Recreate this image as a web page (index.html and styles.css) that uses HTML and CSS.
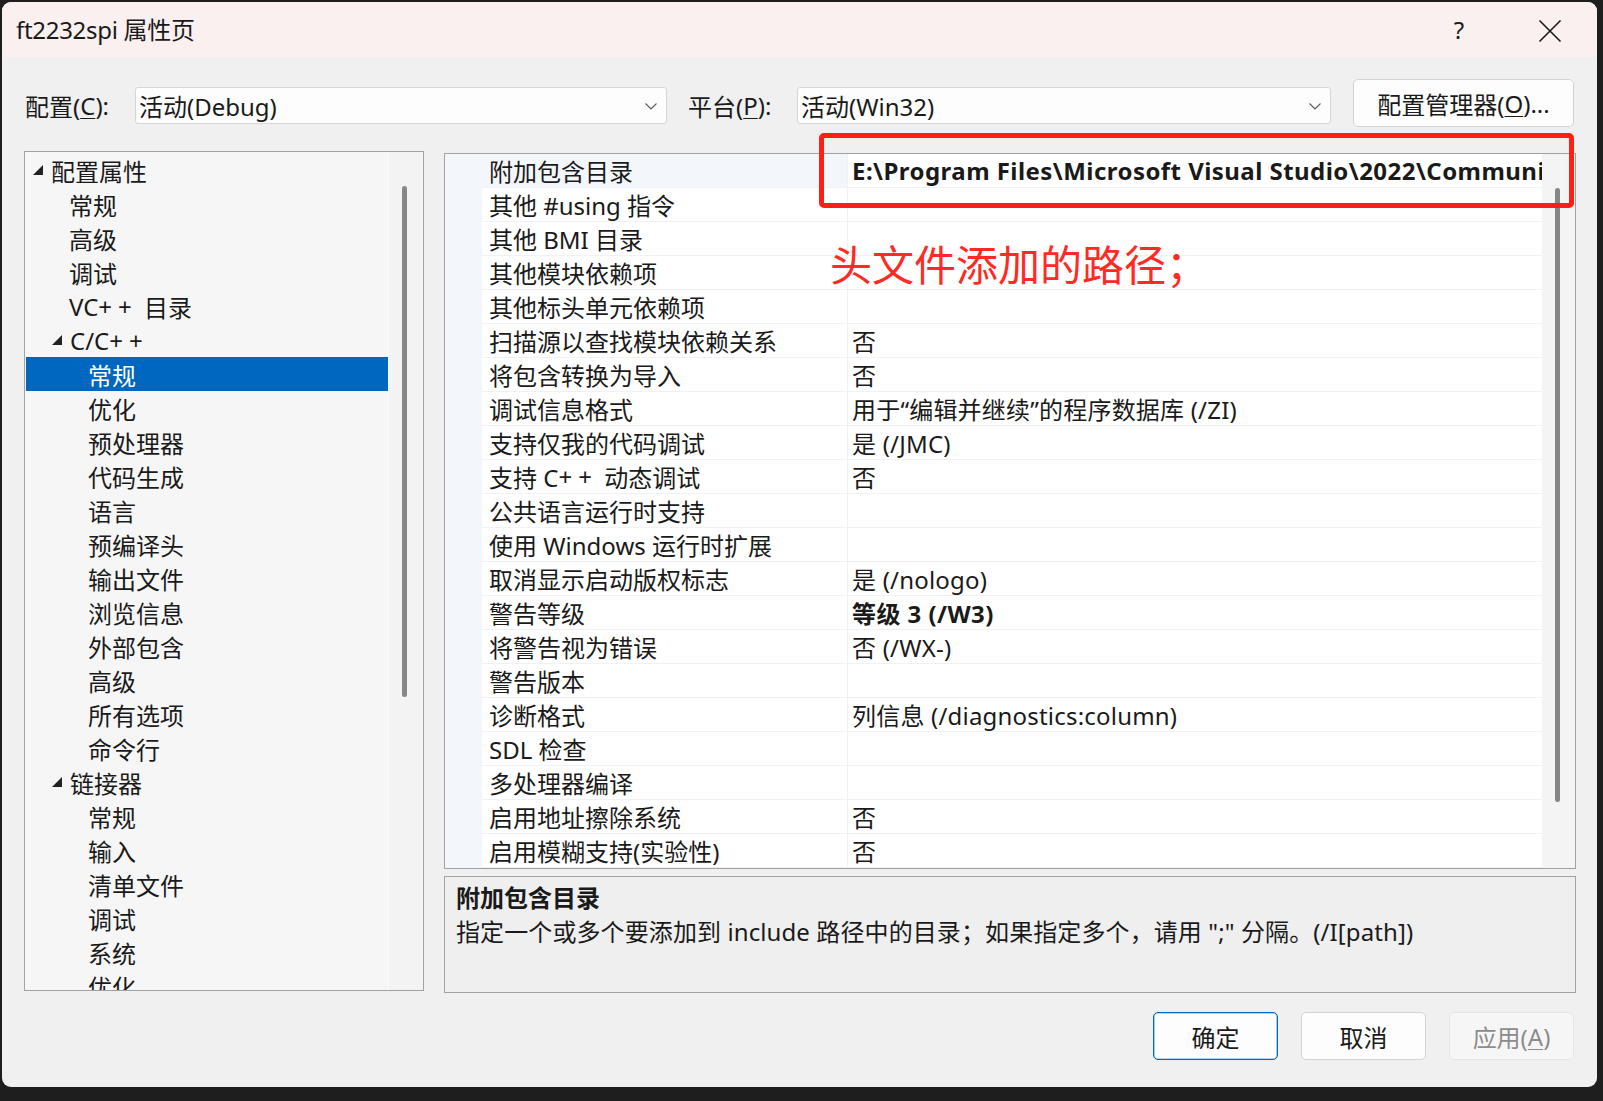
FILE: index.html
```html
<!DOCTYPE html>
<html lang="zh-CN">
<head>
<meta charset="utf-8">
<title>ft2232spi 属性页</title>
<link rel="stylesheet" href="styles.css">
</head>
<body>
<div class="dialog">
  <div class="titlebar">
    <span class="title">ft2232spi 属性页</span>
    <span class="help">?</span>
    <span class="close"><svg width="24" height="24" viewBox="0 0 24 24"><path d="M1.5 1.5 L22.5 22.5 M22.5 1.5 L1.5 22.5" stroke="#1a1a1a" stroke-width="1.6" fill="none"/></svg></span>
  </div>

  <div class="config-row">
    <span class="lbl lbl-config">配置(<u>C</u>):</span>
    <div class="combo combo-config"><span class="combo-text">活动(Debug)</span><svg class="chev" width="12" height="7" viewBox="0 0 12 7"><path d="M0.5 0.5 L6 6 L11.5 0.5" stroke="#5a5a5a" stroke-width="1.1" fill="none"/></svg></div>
    <span class="lbl lbl-platform">平台(<u>P</u>):</span>
    <div class="combo combo-platform"><span class="combo-text">活动(Win32)</span><svg class="chev" width="12" height="7" viewBox="0 0 12 7"><path d="M0.5 0.5 L6 6 L11.5 0.5" stroke="#5a5a5a" stroke-width="1.1" fill="none"/></svg></div>
    <button class="btn btn-manager">配置管理器(<u>O</u>)...</button>
  </div>

  <div class="main">
    <div class="tree">
      <div class="tree-list">
        <div class="node l0"><svg class="tri" width="10" height="10" viewBox="0 0 10 10"><polygon points="10,0 10,10 0,10" fill="#222"/></svg>配置属性</div>
        <div class="node l1">常规</div>
        <div class="node l1">高级</div>
        <div class="node l1">调试</div>
        <div class="node l1">VC<span class="pp">++</span> 目录</div>
        <div class="node l1 exp"><svg class="tri" width="10" height="10" viewBox="0 0 10 10"><polygon points="10,0 10,10 0,10" fill="#222"/></svg>C/C<span class="pp">++</span></div>
        <div class="node l2 selected">常规</div>
        <div class="node l2">优化</div>
        <div class="node l2">预处理器</div>
        <div class="node l2">代码生成</div>
        <div class="node l2">语言</div>
        <div class="node l2">预编译头</div>
        <div class="node l2">输出文件</div>
        <div class="node l2">浏览信息</div>
        <div class="node l2">外部包含</div>
        <div class="node l2">高级</div>
        <div class="node l2">所有选项</div>
        <div class="node l2">命令行</div>
        <div class="node l1 exp"><svg class="tri" width="10" height="10" viewBox="0 0 10 10"><polygon points="10,0 10,10 0,10" fill="#222"/></svg>链接器</div>
        <div class="node l2">常规</div>
        <div class="node l2">输入</div>
        <div class="node l2">清单文件</div>
        <div class="node l2">调试</div>
        <div class="node l2">系统</div>
        <div class="node l2">优化</div>
      </div>
      <div class="vscroll tree-scroll"><div class="thumb tree-thumb"></div></div>
    </div>

    <div class="right">
      <div class="grid">
        <div class="gutter"></div>
        <div class="rows">
          <div class="row first"><div class="name">附加包含目录</div><div class="value bold">E:\Program Files\Microsoft Visual Studio\2022\Community\VC\Tools\MSVC\include</div></div>
          <div class="row"><div class="name">其他 #using 指令</div><div class="value"></div></div>
          <div class="row"><div class="name">其他 BMI 目录</div><div class="value"></div></div>
          <div class="row"><div class="name">其他模块依赖项</div><div class="value"></div></div>
          <div class="row"><div class="name">其他标头单元依赖项</div><div class="value"></div></div>
          <div class="row"><div class="name">扫描源以查找模块依赖关系</div><div class="value">否</div></div>
          <div class="row"><div class="name">将包含转换为导入</div><div class="value">否</div></div>
          <div class="row"><div class="name">调试信息格式</div><div class="value">用于“编辑并继续”的程序数据库 (/ZI)</div></div>
          <div class="row"><div class="name">支持仅我的代码调试</div><div class="value">是 (/JMC)</div></div>
          <div class="row"><div class="name">支持 C<span class="pp">++</span> 动态调试</div><div class="value">否</div></div>
          <div class="row"><div class="name">公共语言运行时支持</div><div class="value"></div></div>
          <div class="row"><div class="name">使用 Windows 运行时扩展</div><div class="value"></div></div>
          <div class="row"><div class="name">取消显示启动版权标志</div><div class="value">是 (/nologo)</div></div>
          <div class="row"><div class="name">警告等级</div><div class="value bold">等级 3 (/W3)</div></div>
          <div class="row"><div class="name">将警告视为错误</div><div class="value">否 (/WX-)</div></div>
          <div class="row"><div class="name">警告版本</div><div class="value"></div></div>
          <div class="row"><div class="name">诊断格式</div><div class="value">列信息 (/diagnostics:column)</div></div>
          <div class="row"><div class="name">SDL 检查</div><div class="value"></div></div>
          <div class="row"><div class="name">多处理器编译</div><div class="value"></div></div>
          <div class="row"><div class="name">启用地址擦除系统</div><div class="value">否</div></div>
          <div class="row"><div class="name">启用模糊支持(实验性)</div><div class="value">否</div></div>
        </div>
        <div class="vscroll grid-scroll"><div class="thumb grid-thumb"></div></div>
      </div>
      <div class="desc">
        <div class="desc-title">附加包含目录</div>
        <div class="desc-text">指定一个或多个要添加到 include 路径中的目录；如果指定多个，请用 ";" 分隔。(/I[path])</div>
      </div>
    </div>
  </div>

  <div class="buttons">
    <button class="btn btn-ok">确定</button>
    <button class="btn btn-cancel">取消</button>
    <button class="btn btn-apply">应用(<u>A</u>)</button>
  </div>

  <div class="redbox"></div>
  <div class="annotation">头文件添加的路径；</div>
</div>
</body>
</html>
```

FILE: styles.css
```css
* { box-sizing: border-box; }

html, body {
  margin: 0;
  padding: 0;
}

body {
  width: 1603px;
  height: 1101px;
  overflow: hidden;
  background: #1e1e1e;
  font-family: "Noto Sans", "Noto Sans CJK SC", sans-serif;
  font-size: 24px;
  color: #1a1a1a;
}

u { text-decoration: underline; text-underline-offset: 3px; text-decoration-thickness: 1px; }

.pp { letter-spacing: 6px; }

.dialog {
  position: relative;
  margin: 2px 0 0 2px;
  width: 1595px;
  height: 1085px;
  background: #f0f0f0;
  border-radius: 9px;
  overflow: hidden;
  display: flex;
  flex-direction: column;
}

/* title bar */
.titlebar {
  flex: none;
  height: 55px;
  background: #f9f0ef;
  display: flex;
  align-items: center;
  padding-left: 14px;
  padding-right: 24px;
}

.title {
  flex: 1;
  line-height: 34px;
  margin-top: 1px;
  letter-spacing: -0.3px;
}

.help {
  width: 46px;
  margin-right: 45px;
  text-align: center;
  line-height: 34px;
}

.close {
  width: 46px;
  display: flex;
  justify-content: center;
  align-items: center;
  margin-top: 2px;
}

/* configuration row */
.config-row {
  flex: none;
  display: flex;
  align-items: flex-start;
  margin-top: 22px;
  height: 48px;
  padding-left: 23px;
}

.lbl {
  margin-top: 8px;
  height: 37px;
  display: flex;
  align-items: center;
  white-space: nowrap;
}

.lbl-config { width: 110px; }
.lbl-platform { width: 130px; padding-left: 21px; }

.combo {
  margin-top: 8px;
  height: 37px;
  background: #fdfdfd;
  border: 1px solid #d6d6d6;
  border-radius: 3px;
  display: flex;
  align-items: center;
  padding-left: 3px;
  padding-right: 9px;
}

.combo-config { width: 532px; }
.combo-platform { width: 534px; }

.combo-text { flex: 1; white-space: nowrap; }

.chev { flex: none; margin-top: 2px; }

.btn {
  font-family: inherit;
  font-size: 24px;
  color: #1a1a1a;
  background: #fdfdfd;
  border: 1px solid #d3d3d3;
  border-radius: 5px;
  height: 48px;
  padding: 0;
  display: flex;
  align-items: center;
  justify-content: center;
  white-space: nowrap;
}

.btn-manager {
  margin-left: 22px;
  width: 221px;
}

/* main area */
.main {
  flex: none;
  display: flex;
  align-items: flex-start;
  margin-top: 24px;
  padding-left: 22px;
  gap: 20px;
  height: 842px;
}

.tree {
  width: 400px;
  height: 840px;
  border: 1px solid #a2a2a2;
  background: #f6f6f6;
  display: flex;
  overflow: hidden;
}

.tree-list {
  width: 363px;
  padding-top: 1px;
  overflow: hidden;
}

.node {
  height: 34px;
  display: flex;
  align-items: center;
  white-space: pre;
}

.node.l0 { padding-left: 8px; }
.node.l1 { padding-left: 44px; }
.node.l1.exp { padding-left: 27px; }
.node.l2 { padding-left: 63px; }

.tri { flex: none; margin-right: 8px; }

.node.selected {
  margin-left: 1px;
  padding-left: 62px;
  background: #0067c0;
  color: #ffffff;
}

.vscroll {
  position: relative;
  flex: none;
  width: 35px;
  background: #f3f3f3;
  border-left: 1px solid #fbfbfb;
}

.thumb {
  position: absolute;
  left: 13px;
  width: 5px;
  border-radius: 3px;
  background: #868686;
}

.tree-thumb { top: 34px; height: 511px; }

.right {
  width: 1132px;
  margin-top: 2px;
  display: flex;
  flex-direction: column;
  gap: 7px;
}

.grid {
  height: 716px;
  border: 1px solid #a2a2a2;
  background: #ffffff;
  display: flex;
  overflow: hidden;
}

.gutter {
  flex: none;
  width: 37px;
  background: #f3f6fb;
}

.rows {
  flex: none;
  width: 1060px;
  overflow: hidden;
}

.row {
  display: flex;
  height: 34px;
}

.name,
.value {
  height: 34px;
  border-bottom: 1px solid #eef1f6;
  white-space: pre;
  overflow: hidden;
  display: flex;
  align-items: center;
}

.name {
  width: 366px;
  padding-left: 7px;
  border-right: 1px solid #eef1f6;
}

.value {
  width: 694px;
  padding-left: 4px;
  letter-spacing: 0.2px;
}

.row.first .name { background: #f3f6fb; }

.bold { font-weight: 700; }

.value.bold { letter-spacing: 0.45px; }

.grid-scroll {
  width: 33px;
  border-left: none;
  background: #f4f4f4;
}

.grid-thumb { left: 13px; top: 34px; height: 614px; }

.desc {
  height: 117px;
  border: 1px solid #a2a2a2;
  background: #efefef;
  padding: 4px 11px 0;
}

.desc-title,
.desc-text {
  line-height: 34px;
  height: 34px;
  white-space: nowrap;
}

.desc-title { font-weight: 700; }

.desc-text { letter-spacing: 0.1px; }

/* bottom buttons */
.buttons {
  flex: none;
  display: flex;
  justify-content: flex-end;
  gap: 23px;
  margin-top: 19px;
  padding-right: 23px;
}

.buttons .btn { width: 125px; }

.btn-ok {
  border: 1px solid #0067c0;
  box-shadow: inset 0 0 0 0.6px rgba(0, 103, 192, 0.55);
}

.btn-apply {
  color: #8c8c8c;
  background: #f6f6f6;
  border-color: #e6e6e6;
}

/* annotation overlay */
.redbox {
  position: absolute;
  left: 817px;
  top: 131px;
  width: 755px;
  height: 75px;
  border: 5px solid #ff1f14;
  border-radius: 5px;
}

.annotation {
  position: absolute;
  left: 828px;
  top: 236px;
  font-family: "Noto Sans CJK SC", sans-serif;
  font-size: 42px;
  line-height: 50px;
  color: #ff2a22;
  white-space: nowrap;
}
```
